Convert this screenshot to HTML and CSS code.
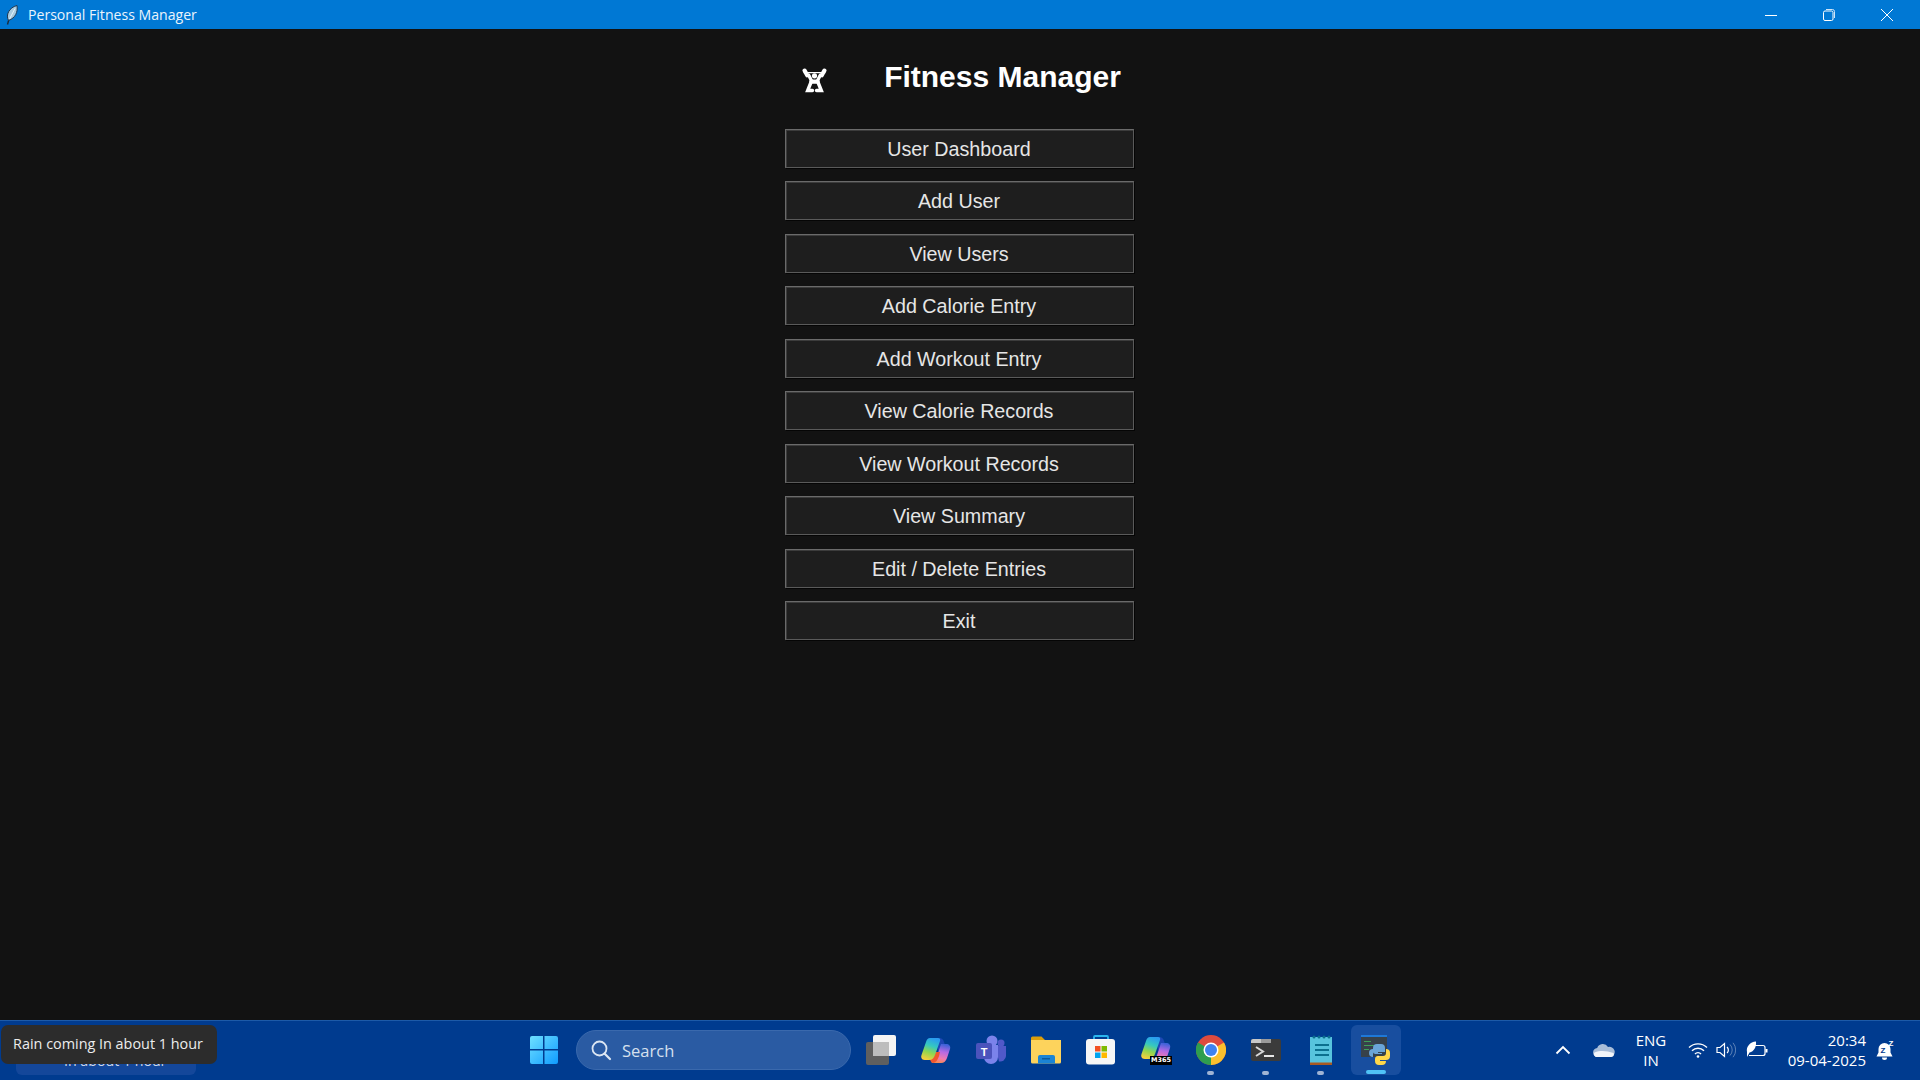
FILE: index.html
```html
<!DOCTYPE html>
<html lang="en">
<head>
<meta charset="utf-8">
<title>Personal Fitness Manager</title>
<link rel="stylesheet" href="styles.css">
</head>
<body>
<div class="window">
  <header class="titlebar">
    <svg class="feather" viewBox="0 0 12 20"><path d="M1.500 19.500 3 14" stroke="#1a2a3a" stroke-width="1.400" fill="none"/><path d="M2.500 15.500C-.5 10 3 2.500 11 .5 12 7 9.500 13 2.500 15.500Z" fill="#a8cbe0" stroke="#1c3550" stroke-width="1"/><path d="M3.500 14 9 3.500" stroke="#f4fbff" stroke-width=".8"/></svg>
    <span class="window-title">Personal Fitness Manager</span>
    <div class="window-controls">
      <span class="wc"><svg width="14" height="14" viewBox="0 0 14 14"><path d="M1 7.500h12" stroke="#fff" fill="none"/></svg></span>
      <span class="wc"><svg width="14" height="14" viewBox="0 0 14 14"><rect x="1.500" y="3" width="9.500" height="9.500" rx="1.500" fill="none" stroke="#fff"/><path d="M4 1.500h6.500a2 2 0 0 1 2 2V10" fill="none" stroke="#cfe4f7"/></svg></span>
      <span class="wc"><svg width="14" height="14" viewBox="0 0 14 14"><path d="M1 1l12 12M13 1 1 13" stroke="#fff" fill="none"/></svg></span>
    </div>
  </header>

  <main class="app">
    <div class="heading">
      <svg class="lifter" viewBox="0 0 24 24"><g fill="none" stroke="#fff" stroke-linecap="round"><path d="M2 4.500h20" stroke-width="1.200"/><path d="M2.500 2.500 5 7M21.500 2.500 19 7" stroke-width="4"/><path d="M6.500 7 9 12M17.500 7 15 12" stroke-width="3.200"/><path d="M9 13h6" stroke-width="4"/><path d="M8.500 14 5.500 21.500h4.500M15.500 14 18.500 21.500H14" stroke-width="3.400"/></g><circle cx="12" cy="7.500" r="2.500" fill="#fff"/></svg>
      <h1 class="app-title">Fitness Manager</h1>
    </div>
    <nav class="menu">
      <button class="menu-btn">User Dashboard</button>
      <button class="menu-btn">Add User</button>
      <button class="menu-btn">View Users</button>
      <button class="menu-btn">Add Calorie Entry</button>
      <button class="menu-btn">Add Workout Entry</button>
      <button class="menu-btn">View Calorie Records</button>
      <button class="menu-btn">View Workout Records</button>
      <button class="menu-btn">View Summary</button>
      <button class="menu-btn">Edit / Delete Entries</button>
      <button class="menu-btn">Exit</button>
    </nav>
  </main>

  <footer class="taskbar">
    <div class="weather"><span class="weather-text">In about 1 hour</span></div>
    <div class="tip">Rain coming In about 1 hour</div>

    <div class="center">
      <span class="start">
        <svg width="30" height="30" viewBox="0 0 30 30"><defs><linearGradient id="w" x1="0" y1="0" x2="1" y2="1"><stop offset="0" stop-color="#6fe0ff"/><stop offset="1" stop-color="#0f9bff"/></linearGradient></defs><path fill="url(#w)" d="M1 3a2 2 0 0 1 2-2h11v13H1ZM15.500 1H27a2 2 0 0 1 2 2v11H15.500ZM1 15.500h13V29H3a2 2 0 0 1-2-2ZM15.500 15.500H29V27a2 2 0 0 1-2 2H15.500Z"/></svg>
      </span>
      <div class="search">
        <svg width="22" height="22" viewBox="0 0 22 22"><circle cx="9.500" cy="9.500" r="7" fill="none" stroke="#dbe6f3" stroke-width="1.800"/><path d="M14.500 14.500 20 20" stroke="#dbe6f3" stroke-width="2.200" stroke-linecap="round"/></svg>
        <span class="search-text">Search</span>
      </div>
      <div class="apps">
        <span class="app-icon"><svg width="32" height="32" viewBox="0 0 32 32"><rect x="1" y="8" width="23" height="23" rx="2" fill="#5f5f5f"/><rect x="8" y="1" width="23" height="21" rx="2" fill="#f4f4f4"/><rect x="8" y="8" width="16" height="14" fill="#bdbdbd"/></svg></span>
        <span class="app-icon"><svg width="30" height="26" viewBox="0 0 30 26"><defs><linearGradient id="c1" x1="0.600" y1="0" x2="0.300" y2="1"><stop offset="0" stop-color="#2a9bf0"/><stop offset=".35" stop-color="#35c8c0"/><stop offset=".65" stop-color="#8fd650"/><stop offset="1" stop-color="#f7d03c"/></linearGradient><linearGradient id="c2" x1="0.600" y1="0" x2="0.400" y2="1"><stop offset="0" stop-color="#3b62d8"/><stop offset=".4" stop-color="#b56ae4"/><stop offset=".75" stop-color="#ef7ab0"/><stop offset="1" stop-color="#f7894e"/></linearGradient></defs><path fill="#1d46b4" d="M15 1h3c3 0 4 1.500 5 4l2 6-8 3Z"/><path fill="url(#c2)" d="M20 7h5c3 0 5 2 4 5l-3 9c-1 3-3 5-6 5h-8c-2 0-2-2-1-3 3 0 4-1 5-4Z"/><path fill="#f0562e" d="M10 15h9l-1 4c-1 3-3 7-6 7-3-1-3-4-3-6Z"/><path fill="url(#c1)" d="M9 1h8c2 0 2.500 1.500 2 3l-5 14c-1 3-3 5-6 5H4c-3 0-4.500-2-3.500-5L5 5c1-3 2-4 4-4Z"/></svg></span>
        <span class="app-icon"><svg width="32" height="30" viewBox="0 0 32 30"><circle cx="17" cy="6" r="5.500" fill="#7b83eb"/><circle cx="26" cy="8" r="3.500" fill="#5059c9"/><path d="M20 11h11v10a6 6 0 0 1-7 5.500Z" fill="#5059c9"/><path d="M9 10h14v12a7 7 0 0 1-14 0Z" fill="#7b83eb"/><rect x="1" y="8" width="16" height="16" rx="2" fill="#4b53bc"/><text x="9" y="21" class="teams-t">T</text></svg></span>
        <span class="app-icon"><svg width="30" height="28" viewBox="0 0 30 28"><path d="M0 2a1.500 1.500 0 0 1 1.500-1.500h9L14 4h-14Z" fill="#dc9e0a"/><path d="M0 4h30v22a1.500 1.500 0 0 1-1.500 1.500h-27A1.500 1.500 0 0 1 0 26Z" fill="#fdd35c"/><path d="M7 27.500V21a2 2 0 0 1 2-2h13a2 2 0 0 1 2 2v6.500Z" fill="#1b84d4"/><rect x="11" y="22" width="8" height="1.500" fill="#0b5a9e"/></svg></span>
        <span class="app-icon"><svg width="30" height="30" viewBox="0 0 30 30"><path d="M8 6V2a1 1 0 0 1 1-1h12a1 1 0 0 1 1 1v4" fill="none" stroke="#29b6ef" stroke-width="1.800"/><rect y="4" width="29" height="25.500" rx="3" fill="#f6f6f6"/><rect x="9" y="11" width="5.500" height="5.500" fill="#f25022"/><rect x="15.500" y="11" width="5.500" height="5.500" fill="#7fba00"/><rect x="9" y="17.500" width="5.500" height="5.500" fill="#00a4ef"/><rect x="15.500" y="17.500" width="5.500" height="5.500" fill="#ffb900"/></svg></span>
        <span class="app-icon m365-slot"><svg width="30" height="26" viewBox="0 0 30 26"><defs><linearGradient id="m1" x1="0.600" y1="0" x2="0.300" y2="1"><stop offset="0" stop-color="#2a9bf0"/><stop offset=".35" stop-color="#35c8c0"/><stop offset=".65" stop-color="#8fd650"/><stop offset="1" stop-color="#f7d03c"/></linearGradient><linearGradient id="m2" x1="0.600" y1="0" x2="0.400" y2="1"><stop offset="0" stop-color="#3b62d8"/><stop offset=".4" stop-color="#b56ae4"/><stop offset=".75" stop-color="#ef7ab0"/><stop offset="1" stop-color="#f7894e"/></linearGradient></defs><path fill="#1d46b4" d="M15 1h3c3 0 4 1.500 5 4l2 6-8 3Z"/><path fill="url(#m2)" d="M20 7h5c3 0 5 2 4 5l-3 9c-1 3-3 5-6 5h-8c-2 0-2-2-1-3 3 0 4-1 5-4Z"/><path fill="url(#m1)" d="M9 1h8c2 0 2.500 1.500 2 3l-5 14c-1 3-3 5-6 5H4c-3 0-4.500-2-3.500-5L5 5c1-3 2-4 4-4Z"/></svg><span class="m365">M365</span></span>
        <span class="app-icon running"><svg width="30" height="30" viewBox="0 0 30 30"><circle cx="15" cy="15" r="15" fill="#dd4b3e"/><path d="M15 15 28 7.500A15 15 0 0 1 15 30Z" fill="#fbc02d"/><path d="M15 15 15 30A15 15 0 0 1 2 7.500Z" fill="#2e9e4f"/><circle cx="15" cy="15" r="7.500" fill="#fff"/><circle cx="15" cy="15" r="6" fill="#3f82f0"/></svg></span>
        <span class="app-icon running"><svg width="30" height="22" viewBox="0 0 30 22"><rect width="30" height="22" rx="2" fill="#3b3b3b"/><path d="M0 2a2 2 0 0 1 2-2h8v4H0Z" fill="#c8c8c8"/><rect x="10" width="10" height="4" fill="#9a9a9a"/><path d="M5 8l7 4.500-7 4.500" fill="none" stroke="#d8d8d8" stroke-width="2"/><rect x="13" y="16" width="10" height="2" fill="#e8e8e8"/></svg></span>
        <span class="app-icon running"><svg width="24" height="30" viewBox="0 0 24 30"><rect x="1" y="2" width="22" height="28" fill="#a85a22"/><rect x="1" y="2" width="22" height="25.500" fill="#57c3dd"/><g fill="#0b6f8e"><rect x="6" y="9" width="14" height="2"/><rect x="6" y="14" width="14" height="2"/><rect x="6" y="19" width="14" height="2"/></g><g fill="#0b6f8e"><circle cx="5" cy="2" r="1.500"/><circle cx="10" cy="2" r="1.500"/><circle cx="15" cy="2" r="1.500"/><circle cx="20" cy="2" r="1.500"/></g></svg></span>
        <span class="app-icon active"><svg width="30" height="30" viewBox="0 0 30 30"><rect x="0" y="0" width="26" height="22" fill="#37414a"/><rect width="26" height="2" fill="#1e78d8"/><g fill="#3f9f58"><rect x="3" y="6" width="7" height="1"/><rect x="3" y="10" width="11" height="1"/><rect x="3" y="14" width="5" height="1"/></g><path d="M12 17v-4a4 4 0 0 1 4-4h4a4 4 0 0 1 4 4v4h-7v1h4v1h-7a3 3 0 0 1-2-2Z" fill="#6aa5d8"/><path d="M8 18a4 4 0 0 1 4-4h5v3h-3a2 2 0 0 0-2 2v3a4 4 0 0 1-4-4Z" fill="#6aa5d8"/><path d="M29 18a4 4 0 0 0-4-4v4a3 3 0 0 1-3 3h-5a3 3 0 0 0-3 3v2a4 4 0 0 0 4 4h3a4 4 0 0 0 4-4h-6v-1h6a4 4 0 0 0 4-4Z" fill="#ffd74a"/></svg></span>
      </div>
    </div>

    <div class="tray">
      <span class="chev"><svg width="16" height="10" viewBox="0 0 16 10"><path d="M1.500 8.500 8 2l6.500 6.500" fill="none" stroke="#fff" stroke-width="1.800"/></svg></span>
      <span class="cloud"><svg width="22" height="14" viewBox="0 0 22 14"><path d="M5 14a4.500 4.500 0 0 1-.8-9A6 6 0 0 1 15 4a5 5 0 0 1 3 10Z" fill="#a9bdd8"/><path d="M5 14a3 3 0 0 1-3.500-4.500C8 7 14 8 20.500 10c1 2 0 4-2.500 4Z" fill="#f2f5fa"/></svg></span>
      <span class="lang">ENG<br>IN</span>
      <span class="wifi"><svg width="20" height="16" viewBox="0 0 20 16"><g fill="none" stroke="#fff" stroke-width="1.400"><path d="M1 5.500a13 13 0 0 1 18 0"/><path d="M4 8.800a8.500 8.500 0 0 1 12 0"/><path d="M7 12a4 4 0 0 1 6 0"/></g><circle cx="10" cy="14.500" r="1.300" fill="#fff"/></svg></span>
      <span class="vol"><svg width="20" height="16" viewBox="0 0 20 16"><path d="M1 5.500h3L8.500 1.500v13L4 10.500H1Z" fill="none" stroke="#fff" stroke-width="1.200"/><path d="M11 5a4 4 0 0 1 0 6" fill="none" stroke="#fff" stroke-width="1.200"/><path d="M14 2.500a8 8 0 0 1 0 11M17 .8a11 11 0 0 1 0 14.400" fill="none" stroke="#5d83b8" stroke-width="1"/></svg></span>
      <span class="batt"><svg width="22" height="18" viewBox="0 0 22 18"><path d="M9 4.500h8a2 2 0 0 1 2 2v6a2 2 0 0 1-2 2H3" fill="none" stroke="#fff" stroke-width="1.200"/><rect x="19.500" y="8" width="2" height="3.500" fill="#fff"/><path d="M1 11C0 5.500 4 1 10 .5 10.500 6 8 10.500 3.500 11.500L1 16Z" fill="#fff"/></svg></span>
      <span class="clock"><span>20:34</span><span>09-04-2025</span></span>
      <span class="bell"><svg width="20" height="22" viewBox="0 0 20 22"><path d="M8.500 4a6 6 0 0 0-6 6v3.500L.5 17.500h16L14.500 13.500V10a6 6 0 0 0-6-6Z" fill="#fff"/><path d="M6 18.500h5a2.500 2.500 0 0 1-5 0Z" fill="#fff"/><text x="4.500" y="14" class="zz-a">Z</text><text x="12.500" y="7" class="zz-b">Z</text></svg></span>
    </div>
  </footer>
</div>
</body>
</html>
```

FILE: styles.css
```css
* { box-sizing: border-box; }
html, body { margin: 0; height: 100%; }
body { background: #121212; font-family: "Open Sans", "Noto Sans", sans-serif; overflow: hidden; }

.window { display: flex; flex-direction: column; height: 1080px; }

/* title bar */
.titlebar { height: 29px; flex: none; background: #0078d4; color: #fff; display: flex; align-items: center; padding-left: 6px; padding-right: 4px; }
.feather { width: 12px; height: 20px; flex: none; }
.window-title { margin-left: 10px; font: 14.100px "Open Sans", sans-serif; color: #eaf4fc; }
.window-controls { margin-left: auto; display: flex; }
.wc { width: 58px; height: 29px; display: flex; align-items: center; justify-content: center; }

/* app */
.app { flex: 1; display: flex; flex-direction: column; align-items: center; padding-top: 30px; min-height: 0; }
.heading { display: flex; align-items: center; gap: 57px; height: 36px; margin-left: 3px; margin-bottom: 34px; }
.lifter { width: 25px; height: 25px; flex: none; margin-top: 6px; }
.app-title { margin: 0; font: bold 30px "Liberation Sans", sans-serif; color: #fff; white-space: nowrap; }
.menu { display: flex; flex-direction: column; gap: 13.440px; width: 349px; margin-left: -2px; }
.menu-btn { height: 39px; background: #1e1e1e; border: 1px solid #6a6a6a; border-right-color: #5a5a5a; border-bottom-color: #5a5a5a; box-shadow: 1px 1px 0 #050505, inset 1px 1px 0 #3c3c3c; color: #e6e6e6; font: 19.700px "Liberation Sans", sans-serif; padding: 2px 0 0; }

/* taskbar */
.taskbar { position: relative; height: 60px; flex: none; background: #003b8f; border-top: 1px solid #1d5aa8; display: flex; align-items: center; padding-bottom: 1px; }
.weather { position: absolute; left: 16px; top: 26px; width: 180px; height: 28px; background: #14479a; border-radius: 6px; padding-left: 48px; white-space: nowrap; }
.weather-text { font-size: 14.200px; line-height: 28px; color: #cfd9e8; }
.tip { position: absolute; left: 1px; top: 4px; width: 216px; height: 39px; background: #2c2c2c; border-radius: 7px; color: #ededed; font-size: 14.400px; display: flex; align-items: center; justify-content: center; white-space: nowrap; padding: 0 2px 2px 0; z-index: 1; }

.center { display: flex; align-items: center; margin-left: 529px; }
.start { width: 30px; height: 30px; }
.search { width: 275px; height: 40px; margin-left: 17px; border-radius: 20px; background: #2a5ba3; border: 1px solid #3a69ad; display: flex; align-items: center; padding-left: 13px; }
.search-text { margin-left: 10px; font-size: 16.500px; color: #d6e0ee; }
.apps { display: flex; align-items: center; margin-left: 2px; }
.app-icon { position: relative; width: 55px; height: 50px; display: flex; align-items: center; justify-content: center; flex: none; }
.running::after { content: ""; position: absolute; bottom: 0; left: 24px; width: 7px; height: 4px; border-radius: 2px; background: #9fb4d4; }
.active { background: #184e9f; border-radius: 6px; width: 50px; margin-left: 2.500px; }
.active::after { content: ""; position: absolute; bottom: 1px; left: 15px; width: 20px; height: 4px; border-radius: 2px; background: #4fc3f7; }
.teams-t { font: bold 11px "Liberation Sans", sans-serif; fill: #fff; text-anchor: middle; }
.m365 { position: absolute; left: 22px; top: 31px; background: #000; color: #fff; font: bold 6.500px/9px "DejaVu Sans", sans-serif; padding: 0 1px; white-space: nowrap; }
.m365-slot svg { margin-bottom: 2px; }

.tray { position: absolute; top: 0; left: 0; right: 0; bottom: 1px; pointer-events: none; display: flex; align-items: center; padding-left: 1555px; }
.chev { width: 16px; height: 10px; display: flex; }
.cloud { width: 22px; height: 14px; margin-left: 22px; display: flex; }
.lang { width: 40px; margin-left: 16px; text-align: center; color: #fff; font-size: 15px; line-height: 20px; }
.wifi { width: 20px; height: 16px; margin-left: 17px; display: flex; }
.vol { width: 20px; height: 16px; margin-left: 8px; display: flex; }
.batt { width: 22px; height: 18px; margin-left: 10px; display: flex; }
.clock { width: 90px; margin-left: 8px; display: flex; flex-direction: column; align-items: flex-end; color: #fff; font-size: 15px; line-height: 20px; }
.bell { width: 20px; height: 22px; margin-left: 10px; display: flex; }
.zz-a { font: bold 8px "Liberation Sans", sans-serif; fill: #003b8f; }
.zz-b { font: bold 8px "Liberation Sans", sans-serif; fill: #fff; }
```
